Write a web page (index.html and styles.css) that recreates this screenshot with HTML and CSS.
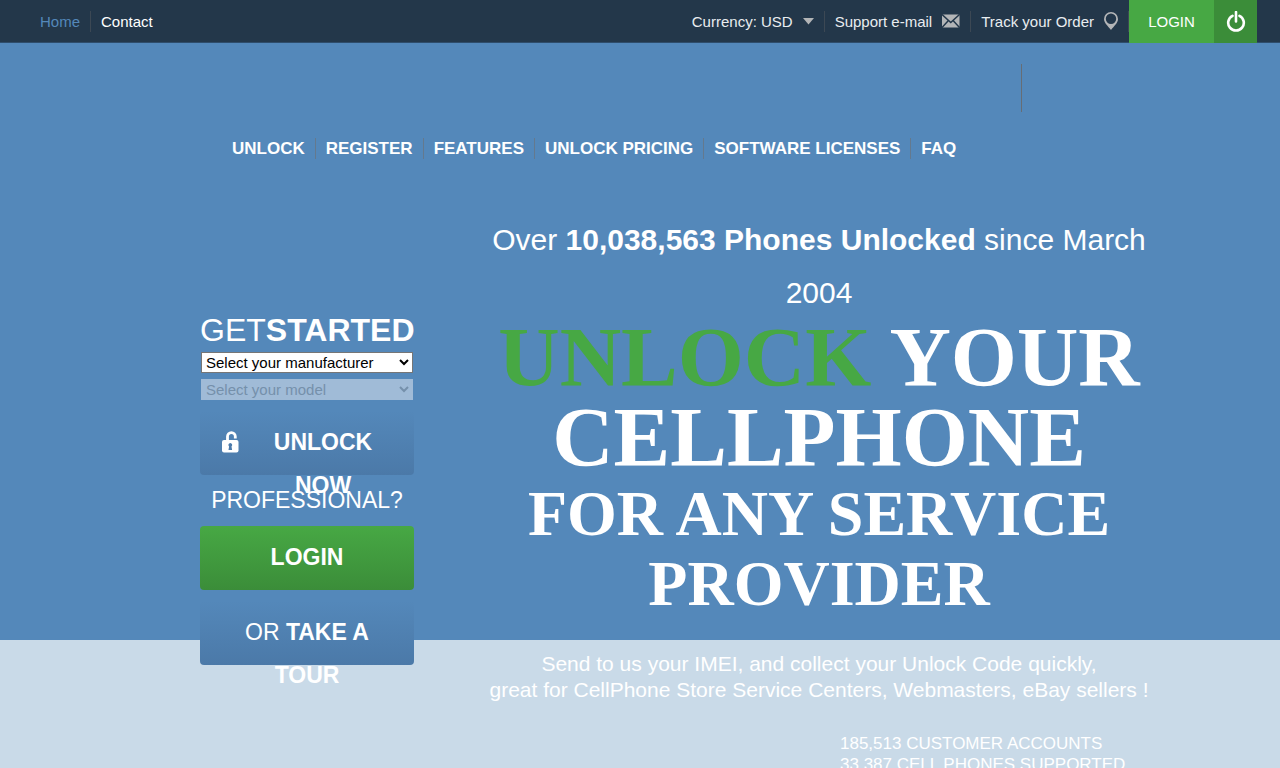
FILE: index.html
```html
<!DOCTYPE html>
<html lang="en">
<head>
<meta charset="utf-8">
<title>Unlock your cellphone</title>
<link rel="stylesheet" href="styles.css">
</head>
<body>
<header class="topbar">
  <nav class="topbar-links" aria-label="Site">
    <a class="top-item current" href="#">Home</a>
    <a class="top-item" href="#">Contact</a>
  </nav>
  <div class="topbar-tools">
    <button class="top-item" type="button">Currency: USD
      <svg class="caret" width="11" height="7" viewBox="0 0 11 7" aria-hidden="true"><path d="M0 0h11L5.500 6.500z" fill="#b3b5b7"/></svg>
    </button>
    <a class="top-item" href="#">Support e-mail
      <svg width="18" height="14" viewBox="0 0 18 14" aria-hidden="true"><rect y=".5" width="17.500" height="13" rx="1" fill="#b3b5b7"/><path d="M0 .5l8.750 8 8.750-8M0 13.500l6-6.500M17.500 13.500l-6-6.500" fill="none" stroke="#23374a" stroke-width="1.500"/></svg>
    </a>
    <a class="top-item" href="#">Track your Order
      <svg width="14" height="18" viewBox="0 0 14 18" aria-hidden="true"><path fill-rule="evenodd" d="M7 0a7 7 0 0 1 7 7c0 4-4 7-7 11C4 14 0 11 0 7a7 7 0 0 1 7-7zm0 1.600a5.200 5.200 0 1 0 0 10.400A5.200 5.200 0 0 0 7 1.600z" fill="#b3b5b7"/></svg>
    </a>
    <a class="top-login" href="#">
      <span class="top-login-text">LOGIN</span>
      <span class="top-login-icon"><svg width="20" height="22" viewBox="0 0 20 22" aria-hidden="true"><path d="M6.500 4.800a7.800 7.800 0 1 0 7 0M10 1v9.500" fill="none" stroke="#fff" stroke-width="2.600" stroke-linecap="round"/></svg></span>
    </a>
  </div>
</header>

<div class="brand-row"><span class="brand-divider"></span></div>

<nav class="main-nav" aria-label="Main">
  <a href="#">UNLOCK</a>
  <a href="#">REGISTER</a>
  <a href="#">FEATURES</a>
  <a href="#">UNLOCK PRICING</a>
  <a href="#">SOFTWARE LICENSES</a>
  <a href="#">FAQ</a>
</nav>

<main class="hero">
  <form class="start">
    <h2 class="start-title">GET<b>STARTED</b></h2>
    <select class="field" aria-label="Manufacturer"><option>Select your manufacturer</option></select>
    <select class="field" aria-label="Model" disabled><option>Select your model</option></select>
    <button class="action unlock" type="button">
      <svg class="lock" width="17" height="22" viewBox="0 0 17 22" aria-hidden="true"><path d="M5.500 10V5.500a3.800 3.800 0 0 1 7.800 0V7.500" fill="none" stroke="#fff" stroke-width="2.800"/><rect y="9" width="16.500" height="12.500" rx="2" fill="#fff"/><path d="M8.300 12a2 2 0 0 1 1.200 3.500l.6 3.500H6.500l.6-3.500A2 2 0 0 1 8.300 12z" fill="#4b7aab"/></svg>
      <b>UNLOCK NOW</b>
    </button>
    <p class="pro">PROFESSIONAL?</p>
    <a class="action login" href="#"><b>LOGIN</b></a>
    <a class="action tour" href="#"><span>OR <b>TAKE A TOUR</b></span></a>
  </form>
  <section class="pitch">
    <p class="count">Over <b>10,038,563 Phones Unlocked</b> since March 2004</p>
    <h1 class="headline"><em>UNLOCK</em> YOUR CELLPHONE</h1>
    <h2 class="subhead">FOR ANY SERVICE PROVIDER</h2>
    <p class="lead">Send to us your IMEI, and collect your Unlock Code quickly,<br>great for CellPhone Store Service Centers, Webmasters, eBay sellers !</p>
    <ul class="stats">
      <li>185,513 CUSTOMER ACCOUNTS</li>
      <li>33,387 CELL PHONES SUPPORTED</li>
    </ul>
  </section>
</main>
</body>
</html>
```
FILE: styles.css
```css
* { box-sizing: border-box; }
html { overflow-x: hidden; scrollbar-width: none; }
body {
  margin: 0;
  background: #c9dae8 linear-gradient(#5488ba, #5488ba) no-repeat 0 0 / 100% 640px;
  color: #fff;
  font-family: "Liberation Sans", Arial, sans-serif;
}
a { color: inherit; text-decoration: none; }
h1, h2, p, ul { margin: 0; padding: 0; }

/* Top bar */
.topbar {
  display: flex;
  justify-content: space-between;
  height: 43px;
  padding: 0 23px 0 30px;
  background: #23374a;
  border-bottom: 1px solid #2f4d6b;
}
.topbar-links, .topbar-tools { display: flex; align-items: center; }
.top-item {
  display: flex;
  align-items: center;
  gap: 10px;
  height: 21px;
  padding: 0 10px;
  border: 0;
  border-right: 1px solid #3c4854;
  background: none;
  color: #e9edf0;
  font: 15px/21px "Liberation Sans", Arial, sans-serif;
}
.topbar-links .top-item:last-child { border-right: 0; color: #fff; }
.topbar-links .current { color: #5488ba; }
.top-login { display: flex; height: 43px; align-self: flex-start; font-size: 15px; line-height: 43px; }
.top-login-text { width: 85px; text-align: center; background: #47a844; }
.top-login-icon {
  display: flex;
  align-items: center;
  justify-content: center;
  width: 43px;
  background: #3b8d39;
}

/* Brand and main navigation */
.brand-row { display: flex; justify-content: flex-end; padding: 21px 258px 26px 0; }
.brand-divider { width: 1px; height: 48px; background: #666d75; }
.main-nav { display: flex; padding-left: 222px; font-size: 17px; font-weight: bold; line-height: 21px; }
.main-nav a { padding: 0 10px; border-right: 1px solid #64798e; }
.main-nav a:last-child { border-right: 0; }

/* Hero */
.hero {
  display: grid;
  grid-template-columns: 214px 1fr;
  gap: 64px;
  padding: 54px 120px 0 200px;
}
.start { display: flex; flex-direction: column; padding-top: 99px; }
.start-title { font-size: 32px; font-weight: normal; line-height: 36px; margin-bottom: 4px; }
.field {
  height: 21px;
  margin: 0 1px 6px;
  padding: 0;
  border: 1px solid #767676;
  border-radius: 0;
  background-color: #fff;
  color: #000;
  font: 15px "Liberation Sans", Arial, sans-serif;
}
.field:disabled { opacity: 1; border-color: #a0bbd7; background-color: #a0bbd7; color: #7590ab; }
.action {
  display: flex;
  justify-content: center;
  align-items: flex-start;
  position: relative;
  height: 64px;
  padding: 10px 32px 0;
  border: 0;
  border-radius: 4px;
  background: linear-gradient(#5488ba, #4b79a8);
  color: #fff;
  font: 23px/43px "Liberation Sans", Arial, sans-serif;
  text-align: center;
}
.unlock { margin-top: 5px; padding-left: 64px; }
.lock { position: absolute; left: 22px; top: 20px; }
.pro { font-size: 23px; line-height: 51px; text-align: center; }
.login { background: linear-gradient(#47a844, #3b8d39); }
.tour { margin-top: 11px; }

.pitch { text-align: center; }
.count { font-size: 30px; line-height: 53px; }
.headline, .subhead { font-family: "Liberation Serif", "Times New Roman", serif; font-weight: bold; }
.headline { margin: -2px 0 2px; font-size: 85px; line-height: 80px; }
.headline em { font-style: normal; color: #47a844; }
.subhead { font-size: 64px; line-height: 70px; }
.lead { margin-top: 32px; font-size: 21px; line-height: 26px; }
.stats {
  margin: 30px 0 0 auto;
  width: 320px;
  list-style: none;
  font-size: 17px;
  line-height: 21px;
  text-align: left;
}
```
